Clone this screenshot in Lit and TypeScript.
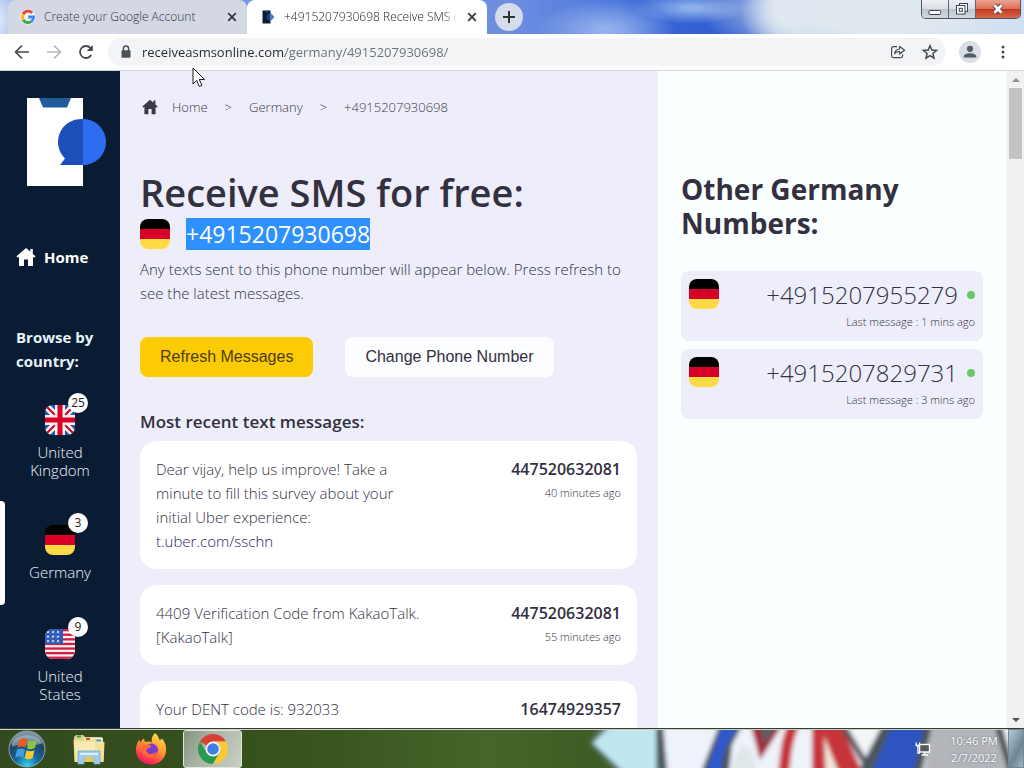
import { LitElement, html, css, svg } from "lit";
import { customElement, property } from "lit/decorators.js";
import { classMap } from "lit/directives/class-map.js";

type Flag = "de" | "gb" | "us";

const houseIcon = (size: number) => html`<svg class="house" width=${size} height=${size} viewBox="0 0 20 20" aria-hidden="true">
  <path fill="currentColor" d="M10 1 0.5 9.3l1.2 1.5L3 9.8V19h5v-6.5h4V19h5V9.8l1.3 1 1.2-1.5L16.8 6.9V2h-2.6v2.6z"/>
</svg>`;

/** Rounded country flag. */
@customElement("country-flag")
export class CountryFlag extends LitElement {
  @property() code: Flag = "de";

  static styles = css`
    :host { display: block; width: 30px; height: 30px; border-radius: 8px; overflow: hidden; flex: none; }
    svg { display: block; }
  `;

  private art() {
    if (this.code === "gb") {
      return svg`<rect width="30" height="30" fill="#1f5aa8"/>
        <path d="M0 0 30 30M30 0 0 30" stroke="#f4f0ee" stroke-width="7"/>
        <path d="M0 0 30 30M30 0 0 30" stroke="#d80027" stroke-width="2"/>
        <path d="M15 0V30M0 15H30" stroke="#f4f0ee" stroke-width="10"/>
        <path d="M15 0V30M0 15H30" stroke="#d80027" stroke-width="5"/>`;
    }
    if (this.code === "us") {
      const rows = [0, 1, 2, 3, 4, 5, 6];
      const pts = [0, 1, 2].flatMap((r) => [0, 1, 2].map((c) => [3 + c * 5, 3 + r * 4.6]));
      return svg`<rect width="30" height="30" fill="#f2f0f0"/>
        ${rows.map((r) => svg`<rect y=${r * 4.6} width="30" height="2.3" fill="#d51c40"/>`)}
        <rect width="18" height="15" fill="#2f5cb8"/>
        ${pts.map(([x, y]) => svg`<path d="M${x} ${y - 1.6}l1.5 3-2.9-2h2.9l-3 2z" fill="#fff"/>`)}`;
    }
    return svg`<rect width="30" height="10" fill="#000"/><rect y="10" width="30" height="10" fill="#d80027"/>
      <rect y="20" width="30" height="10" fill="#ffda44"/>`;
  }

  render() {
    return html`<svg width="30" height="30" viewBox="0 0 30 30" aria-hidden="true">${this.art()}</svg>`;
  }
}

/** Tab strip, window buttons and address bar. */
@customElement("browser-chrome")
export class BrowserChrome extends LitElement {
  static styles = css`
    :host { display: block; font-family: "Open Sans", "Noto Sans", sans-serif; }
    button { border: 0; padding: 0; margin: 0; background: none; display: grid; place-items: center; color: #45494e; }
    svg { display: block; }
    .strip {
      display: flex; height: 34px; align-items: stretch; padding-left: 8px;
      background:
        radial-gradient(ellipse 50px 50px at 790px 8px, #e0e9f1 30%, #e0e9f100),
        radial-gradient(ellipse 180px 60px at 880px 10px, #dfe8ef 40%, #dfe8ef00),
        radial-gradient(ellipse 60px 16px at 692px 8px, #8fb1ea 10%, #8fb1ea00),
        radial-gradient(ellipse 70px 30px at 605px 30px, #93b0ec 10%, #93b0ec00),
        radial-gradient(ellipse 30px 60px at 0 20px, #dce9f8, #dce9f800),
        linear-gradient(90deg, #7d9be6 0, #6e8ddf 50%, #4d78dc 60%, #3562d4 66%, #2f5ccf 74%, #6c91dd 77%, #c4d6f3 90%, #cbdbf4);
    }
    .tab { display: flex; align-items: center; width: 239px; box-sizing: border-box; padding: 0 7px 0 12px; border-radius: 8px 8px 0 0; background: #d3d8e4; }
    .tab.active { background: #fff; width: 240px; padding-left: 14px; }
    .title { flex: 1; font-size: 12px; line-height: 16px; margin-left: 8px; color: #33373d; white-space: nowrap; overflow: hidden; }
    .tab.active .title { color: #202328; margin-right: 6px; -webkit-mask-image: linear-gradient(90deg, #000 92%, transparent); mask-image: linear-gradient(90deg, #000 92%, transparent); }
    .close { width: 16px; height: 16px; }
    .add { width: 28px; height: 28px; border-radius: 14px; background: #d5dcec; align-self: center; margin-left: 8px; color: #333; }
    .window { display: flex; margin-left: auto; margin-right: 3px; height: 18px; border: 1px solid #4d5563; border-top: 0; border-radius: 0 0 5px 5px; overflow: hidden; }
    .window button { width: 27px; height: 18px; background: linear-gradient(#eef1f5, #dadfe5 48%, #bcc3cc 52%, #d3d9e0); border-right: 1px solid #5c6472; }
    .window .quit { width: 44px; border: 0; background: linear-gradient(#eba38f, #dd7058 48%, #c23a1d 52%, #d9694c); }
    .bar { display: flex; align-items: center; height: 36px; padding: 0 10px 0 8px; background: #fff; border-bottom: 1px solid #d3d6da; }
    .nav { width: 28px; height: 28px; margin-right: 4px; }
    .omni { flex: 1; display: flex; align-items: center; height: 28px; border-radius: 14px; background: #f2f4f5; padding: 0 0 0 11px; margin-left: 4px; }
    .url {
      flex: 1; min-width: 0; border: 0; outline: 0; padding: 0; margin-left: 9px; height: 24px; font: 13px/24px "Open Sans", "Noto Sans", sans-serif;
      background: linear-gradient(90deg, #25282c 143px, #6b7076 143px); -webkit-background-clip: text; background-clip: text; color: transparent;
    }
    .omni button { width: 32px; height: 28px; }
    .avatar { width: 22px; height: 22px; border-radius: 11px; background: #dadfe6; margin-left: 13px; overflow: hidden; }
    .menu { width: 22px; height: 28px; margin-left: 11px; }
  `;

  private cross() {
    return html`<svg width="10" height="10" viewBox="0 0 10 10"><path d="M1.2 1.2 8.8 8.8M8.8 1.2 1.2 8.8" stroke="#35383d" stroke-width="1.8"/></svg>`;
  }

  render() {
    return html`
      <div class="strip">
        <div class="tab">
          <svg width="16" height="16" viewBox="0 0 16 16" aria-hidden="true" fill="none" stroke-width="2.8">
            <circle cx="8" cy="8" r="7.8" fill="#eef0f6"/>
            <path d="M12.2 3.9A5.6 5.6 0 0 0 3.1 5.3" stroke="#ea4335"/>
            <path d="M3.1 5.3a5.6 5.6 0 0 0 0 5.4" stroke="#fbbc05"/>
            <path d="M3.1 10.7a5.6 5.6 0 0 0 8.6 1.5" stroke="#34a853"/>
            <path d="M11.7 12.2A5.6 5.6 0 0 0 13.6 8H8.2" stroke="#4285f4"/>
          </svg>
          <span class="title">Create your Google Account</span>
          <button class="close" aria-label="Close tab">${this.cross()}</button>
        </div>
        <div class="tab active">
          <svg width="15" height="16" viewBox="0 0 15 16" aria-hidden="true">
            <path d="M1.500 1.500h8v13h-8z" fill="#0b1c33"/><path d="M3.500 1.500h4l-1 1.400h-2z" fill="#2b5f9c"/>
            <path d="M9 4.200a3.800 3.800 0 1 0 0 7.600z" fill="#1a3a78"/><path d="M9.500 4.200 13 8 9.500 11.800z" fill="#5079c4" stroke="#5079c4" stroke-linejoin="round"/>
          </svg>
          <span class="title">+4915207930698 Receive SMS o</span>
          <button class="close" aria-label="Close tab">${this.cross()}</button>
        </div>
        <button class="add" aria-label="New tab">
          <svg width="14" height="14" viewBox="0 0 14 14"><path d="M7 1v12M1 7h12" stroke="currentColor" stroke-width="2"/></svg>
        </button>
        <div class="window">
          <button aria-label="Minimize"><svg width="14" height="14" viewBox="0 0 14 14"><rect x="1" y="8.500" width="11.500" height="4" rx="0.800" fill="#fff" stroke="#3d444f"/></svg></button>
          <button aria-label="Restore"><svg width="14" height="14" viewBox="0 0 14 14" fill="#fff" stroke="#3d444f"><rect x="4.500" y="1.500" width="8" height="8"/><rect x="1.500" y="3.500" width="8.500" height="8.500"/><rect x="4.300" y="6.300" width="3" height="3"/></svg></button>
          <button class="quit" aria-label="Close"><svg width="14" height="12" viewBox="0 0 14 12"><path d="M3.400 2.200 10.600 9.800M10.600 2.200 3.400 9.800" stroke="#503a4c" stroke-width="4.600"/><path d="M3.400 2.200 10.600 9.800M10.600 2.200 3.400 9.800" stroke="#fff" stroke-width="2.800"/></svg></button>
        </div>
      </div>
      <div class="bar">
        <button class="nav" aria-label="Back"><svg width="16" height="16" viewBox="0 0 16 16" fill="none" stroke="currentColor" stroke-width="1.700"><path d="M15 8H2M8 1.500 1.600 8 8 14.500"/></svg></button>
        <button class="nav" aria-label="Forward"><svg width="16" height="16" viewBox="0 0 16 16" fill="none" stroke="#b4b7bb" stroke-width="1.700"><path d="M1 8h13M8 1.500 14.400 8 8 14.500"/></svg></button>
        <button class="nav" aria-label="Reload"><svg width="16" height="16" viewBox="0 0 16 16"><path d="M13.200 11A6 6 0 1 1 12.400 3.900L13.600 5.400" fill="none" stroke="currentColor" stroke-width="1.800"/><path d="M14.800 1v6H8.800z" fill="currentColor"/></svg></button>
        <div class="omni">
          <svg width="14" height="16" viewBox="0 0 14 16" aria-hidden="true"><rect x="2.500" y="6.300" width="9" height="7.400" rx="1" fill="#4d5156"/><path d="M4.400 7V4.600a2.600 2.600 0 0 1 5.200 0V7" fill="none" stroke="#4d5156" stroke-width="1.500"/></svg>
          <input class="url" type="text" aria-label="Address and search bar" spellcheck="false" .value=${"receiveasmsonline.com/germany/4915207930698/"} />
          <button aria-label="Share"><svg width="16" height="16" viewBox="0 0 16 16" fill="none" stroke="currentColor" stroke-width="1.200" stroke-linejoin="round"><path d="M7 2.600H3.400a1.800 1.800 0 0 0-1.800 1.800v7.400a1.800 1.800 0 0 0 1.800 1.800h7.400a1.800 1.800 0 0 0 1.800-1.800V10.500"/><path d="M4.600 9.600C5 6.600 7 5.200 9.700 5V2.400L14.600 6.200 9.700 10V7.500C7.500 7.400 6 8 4.600 9.600z"/></svg></button>
          <button aria-label="Bookmark"><svg width="16" height="16" viewBox="0 0 16 16" fill="none" stroke="currentColor" stroke-width="1.500"><path d="M8 1.800 9.800 6.100 14.500 6.500 10.900 9.500 12 14.100 8 11.600 4 14.100 5.100 9.500 1.500 6.500 6.200 6.100z"/></svg></button>
        </div>
        <button class="avatar" aria-label="Profile"><svg width="22" height="22" viewBox="0 0 22 22" fill="#535b66"><circle cx="11" cy="7.800" r="3.100"/><path d="M4.800 16.600v-1c0-2.400 3.300-3.400 6.200-3.400s6.200 1 6.200 3.400v1z"/></svg></button>
        <button class="menu" aria-label="Menu"><svg width="4" height="14" viewBox="0 0 4 14" fill="currentColor"><circle cx="2" cy="2" r="1.500"/><circle cx="2" cy="7" r="1.500"/><circle cx="2" cy="12" r="1.500"/></svg></button>
      </div>`;
  }
}

/** Desktop taskbar. */
@customElement("task-bar")
export class TaskBar extends LitElement {
  static styles = css`
    :host { display: grid; height: 40px; overflow: hidden; font-family: "Open Sans", "Noto Sans", sans-serif; }
    .scene { grid-area: 1 / 1; background: linear-gradient(90deg, #33491f, #38531d 30%, #45662a 48%, #3c5a22 60%); display: flex; justify-content: flex-end; }
    .items { grid-area: 1 / 1; display: flex; align-items: center; border-top: 1px solid #333d33; box-shadow: inset 0 1px #c9d2c4; }
    svg { display: block; }
    button { border: 0; padding: 0; margin: 0; background: none; display: grid; place-items: center; }
    .start { width: 54px; height: 39px; }
    .app { width: 55px; height: 38px; box-sizing: border-box; }
    .first { margin-left: 1px; width: 68px; }
    .open { width: 59px; border: 1px solid #e2e6de; border-radius: 3px; margin-left: 5px; background: linear-gradient(120deg, #84937f, #a9b3a4 40%, #c9d0c5); }
    .tray { margin-left: auto; display: flex; align-items: center; }
    .clock { width: 68px; margin-left: 9px; text-align: center; color: #fff; font-size: 11px; font-weight: 400; line-height: 17px; text-shadow: 0 0 2px #5b6474; }
    .peek { width: 16px; height: 39px; box-sizing: border-box; border: 1px solid #6e8799; background: linear-gradient(120deg, #b5cbd6, #6c8593 60%, #9fb7c4); }
  `;

  render() {
    return html`
      <div class="scene">
        <svg width="440" height="40" viewBox="584 728 440 40" aria-hidden="true">
          <defs><filter id="soft" x="-5%" y="-20%" width="110%" height="140%"><feGaussianBlur stdDeviation="2"/></filter></defs>
          <g filter="url(#soft)">
            <path d="M588 743 604 718H670V780H622z" fill="#54705a"/>
            <path d="M593 743 614 722H656V780H632z" fill="#c0e6f0"/>
            <path d="M662 718H1034V780H668z" fill="#eef2f9"/>
            <path d="M659 718 664 780" stroke="#4e5664" stroke-width="7"/>
            <path d="M722 718H746L732 745 728 780H698z" fill="#4b5666"/>
            <path d="M727 718H740L722 750 716 780H706z" fill="#2f58cf" stroke="#2f58cf" stroke-width="4"/>
            <path d="M733 764 741 744 752 752 758 780H730z" fill="#dfe7ea"/>
            <path d="M750 722 760 760 784 722z" fill="#a32b3c"/>
            <path d="M759 720 764 744 780 722z" fill="#586068"/>
            <path d="M797 718C786 738 786 752 783 780" fill="none" stroke="#c5363a" stroke-width="11"/>
            <path d="M812 718H838L866 780H812z" fill="#c5363a"/>
            <path d="M824 736 842 780H826z" fill="#f1e6dc"/>
            <path d="M838 718 866 764" stroke="#5b5158" stroke-width="6"/>
            <path d="M846 718H888L864 752z" fill="#f3f5f7"/>
            <path d="M886 718H934L920 780H854z" fill="#4b555c"/>
            <path d="M895 718H926L912 780H868z" fill="#2e55bf"/>
            <path d="M934 718H1000L1012 780H922z" fill="#b3b5bb"/>
            <path d="M996 718 1014 780" stroke="#4a4f54" stroke-width="7"/>
          </g>
        </svg>
      </div>
      <div class="items">
        <button class="start" aria-label="Start">
          <svg width="38" height="38" viewBox="0 0 38 38">
            <defs><radialGradient id="orb" cx="50%" cy="95%" r="85%"><stop offset="0" stop-color="#35d0f5"/><stop offset=".4" stop-color="#17659e"/><stop offset=".8" stop-color="#20435f"/><stop offset="1" stop-color="#7c94a3"/></radialGradient></defs>
            <circle cx="19" cy="19" r="18" fill="url(#orb)" stroke="#8fa6ae" stroke-width="1"/>
            <path d="M4 13C8 3 30 3 34 13 26 18 12 12 4 17z" fill="#d5e4ec" opacity=".45"/>
            <path d="M11.500 9.500q4-2.500 7.800 0L17.500 17.500q-4-2-8 0z" fill="#ee5a24"/>
            <path d="M20.800 10.300q4 2 8-.3L27 18q-4 2.200-8 .2z" fill="#8cc540"/>
            <path d="M9 19.500q4-2 8 0L15.200 27.500q-4-2-8 .2z" fill="#3f9de0"/>
            <path d="M18.500 20.300q4 2 8 0L24.600 28.300q-4 2-8 0z" fill="#fcc82f"/>
          </svg>
        </button>
        <button class="app first" aria-label="Windows Explorer">
          <svg width="34" height="32" viewBox="0 0 34 32">
            <path d="M2 4 4 2H11L13 4H30V8H2z" fill="#e5d28a"/><path d="M12 5h19v4H12z" fill="#f5ecc4"/><rect x="5" y="2.500" width="4" height="2" fill="#32a14a"/><rect x="14" y="5" width="4" height="2" fill="#d64b3e"/><rect x="23" y="6.500" width="6" height="2" fill="#4793cf"/>
            <path d="M1.500 7H24l1 2h7.500l-.8 20H2.500z" fill="#f3e099"/><path d="M3 9h20v18H4z" fill="#f8ebb4"/>
            <path d="M6 18H28V31H22V26H12V31H6z" fill="#9fcdea" stroke="#6ca6cf" stroke-width=".8"/><path d="M8 20h18v2H8z" fill="#d9effa"/><path d="M13 24h8v5h-8z" fill="#e9c84e"/>
          </svg>
        </button>
        <button class="app" aria-label="Firefox">
          <svg width="32" height="34" viewBox="0 0 32 34">
            <defs><linearGradient id="fox" x1=".8" y1="0" x2=".3" y2="1"><stop offset="0" stop-color="#ffe14a"/><stop offset=".45" stop-color="#ff9a2e"/><stop offset=".8" stop-color="#ff3d4d"/><stop offset="1" stop-color="#e4156b"/></linearGradient></defs>
            <path d="M20 1c3 2.500 4 5 4.500 7 1.500 0 2.500-1.500 2.500-1.500 3.500 4 4.500 8.500 4 13C30 27 24 32.500 16 32.500 7 32.500 1 26 1 18 1 13 3 9 4.500 7.500L5 11c1-2 2.500-3.500 4-4.500L10 10c3-1 5.500-.5 7 .5C16 7 17.500 3 20 1z" fill="url(#fox)"/>
            <circle cx="16.500" cy="18" r="6.500" fill="#7a3ad0"/>
            <path d="M8 13c3-1.500 6-1 8.500 1-1 2-4 2-5 3.500-.5 3 2 5 5 4.500 3-.500 4-2 5-2-1 4-5 6-9 5-5-1.500-6.500-7-4.500-12z" fill="#ff6a35"/>
          </svg>
        </button>
        <button class="app open" aria-label="Google Chrome">
          <svg width="32" height="32" viewBox="0 0 32 32">
            <path d="M16 16 3 8.500A15 15 0 0 1 29 8.500L16 8.500z" fill="#d93f34"/>
            <path d="M3 8.500A15 15 0 0 0 16 31l6.500-11.300L16 16 9.500 19.700z" fill="#279a52"/>
            <path d="M29 8.500A15 15 0 0 1 16 31L22.500 19.700A7.500 7.500 0 0 0 16 8.500z" fill="#fbc934"/>
            <circle cx="16" cy="16" r="7.400" fill="#f4f6f8"/><circle cx="16" cy="16" r="5.800" fill="#3f7de8"/>
          </svg>
        </button>
        <div class="tray">
          <svg width="16" height="16" viewBox="0 0 16 16" aria-hidden="true" fill="none"><rect x="4.500" y="3.500" width="10" height="7.500" fill="#56585c" stroke="#fff" stroke-width="1.400"/><path d="M9.500 11v2.500M6.500 14h6.500" stroke="#fff" stroke-width="1.600"/><path d="M1.200 1.500v3h3.400v-3M2.900 4.500V12H5" stroke="#fff" stroke-width="1.300"/></svg>
          <div class="clock"><div>10:46 PM</div><div>2/7/2022</div></div>
          <button class="peek" aria-label="Show desktop"></button>
        </div>
      </div>`;
  }
}

const countries: { name: string; code: Flag; count: number; current?: boolean }[] = [
  { name: "United Kingdom", code: "gb", count: 25 },
  { name: "Germany", code: "de", count: 3, current: true },
  { name: "United States", code: "us", count: 9 },
];

const messages: { body: unknown; from: string; when?: string }[] = [
  { body: html`Dear vijay, help us improve! Take a minute to fill this survey about your initial Uber experience: <a class="link" href="#uber">t.uber.com/sschn</a>`, from: "447520632081", when: "40 minutes ago" },
  { body: "4409 Verification Code from KakaoTalk. [KakaoTalk]", from: "447520632081", when: "55 minutes ago" },
  { body: "Your DENT code is: 932033", from: "16474929357" },
];

const others = [
  { number: "+4915207955279", ago: "Last message : 1 mins ago" },
  { number: "+4915207829731", ago: "Last message : 3 mins ago" },
];

@customElement("app-root")
export class AppRoot extends LitElement {
  static styles = css`
    :host { display: grid; grid-template-rows: auto minmax(0, 1fr) auto; height: 100vh; overflow: hidden; position: relative; font: 300 15px/24px "Open Sans", "Noto Sans", sans-serif; color: #33303f; }
    svg { display: block; }
    a { color: inherit; text-decoration: none; }
    h1, h2, h3, p, ul, ol { margin: 0; padding: 0; list-style: none; }
    .page { display: grid; grid-template-columns: 120px minmax(0, 1fr) 349px 17px; min-height: 0; }
    .side, main, aside { overflow: hidden; min-height: 0; }

    .side { background: #0a1c33; color: #fff; }
    .logo { margin: 27px 0 0 27px; }
    .home { display: flex; align-items: center; gap: 8px; margin: 59px 0 0 16px; font-weight: 700; }
    .browse { font-weight: 700; margin: 56px 16px 8px; color: #e6f3f8; }
    .country { display: flex; flex-direction: column; align-items: center; box-sizing: border-box; min-height: 104px; padding: 24px 24px 22px; line-height: 18px; text-align: center; color: #f0f7fa; position: relative; }
    .country .name { margin-top: 8px; }
    .country.current::before { content: ""; position: absolute; left: 0; top: 0; bottom: 0; width: 5px; background: #fff; border-radius: 0 4px 4px 0; }
    .pin { position: relative; }
    .count { position: absolute; top: -12px; right: -13px; width: 20px; height: 20px; border-radius: 10px; background: #fff; color: #222; font-size: 12px; line-height: 20px; font-weight: 400; text-align: center; }

    main { background: #edeefa; padding: 24px 21px 0 20px; }
    .crumbs { display: flex; align-items: center; font-size: 13px; color: #3c3947; }
    .crumbs .house { margin: 0 14px 0 2px; }
    .sep { margin: 0 17px; }
    h1 { font-size: 38px; line-height: 48px; font-weight: 600; margin: 49px 0 2px; }
    .phone { display: flex; align-items: center; gap: 16px; }
    .picked { background: #2f90ff; color: #fff; font-size: 23px; line-height: 32px; font-weight: 400; }
    .intro { margin-top: 7px; }
    .actions { display: flex; gap: 32px; margin-top: 32px; }
    .action { height: 40px; padding: 0 20px; border: 0; border-radius: 8px; font: 16px/24px "Liberation Sans", Arial, sans-serif; color: #33303f; background: #fbfdff; }
    .primary { background: #fbcb04; color: #4e3b16; }
    .recent { font-size: 17px; line-height: 24px; font-weight: 600; margin: 33px 0 7px; }
    .messages { display: grid; gap: 16px; }
    .message { display: grid; grid-template-columns: 58fr 42fr; padding: 16px; background: #fff; border-radius: 16px; }
    .message .meta { text-align: right; min-height: 48px; }
    .from { font-size: 16px; font-weight: 600; }
    .when { font-size: 11px; }
    .link { color: #2c2460; display: block; }

    aside { background: #fafeff; padding: 101px 24px 0 23px; }
    h2 { font-size: 28px; line-height: 34px; font-weight: 700; margin-bottom: 31px; }
    .others { display: grid; gap: 8px; }
    .other { display: grid; grid-template-columns: auto 1fr; padding: 8px; border-radius: 8px; background: #edeefa; text-align: right; }
    .number { display: flex; align-items: center; justify-content: flex-end; gap: 9px; font-size: 24px; line-height: 32px; }
    .dot { width: 8px; height: 8px; border-radius: 4px; background: #6cc767; }
    .ago { font-size: 11px; line-height: 22px; }

    .scroll { display: flex; flex-direction: column; align-items: center; background: #f1f1f1; }
    .scroll .up, .scroll .down { height: 17px; display: grid; place-items: center; }
    .thumb { width: 13px; height: 71px; background: #c3c3c3; }
    .down { margin-top: auto; }
    .pointer { position: absolute; left: 192px; top: 67px; }
  `;

  render() {
    return html`
      <browser-chrome></browser-chrome>
      <div class="page">
        <nav class="side" aria-label="Countries">
          <svg class="logo" width="79" height="88" viewBox="0 0 79 88" role="img" aria-label="Receive a SMS online">
            <path d="M0 0h56v88H0z" fill="#fff"/><path d="M12 0h32l-4 9.500H16z" fill="#1f5c99"/>
            <path d="M55.500 21a23 23 0 0 1 0 46H33l5-6.500A23 23 0 0 1 55.500 21z" fill="#1d4fb8"/>
            <path d="M56 21a23 23 0 0 1 0 46z" fill="#2e6cf0"/>
          </svg>
          <a class="home" href="#home">${houseIcon(20)}<span>Home</span></a>
          <p class="browse">Browse by country:</p>
          <ul>
            ${countries.map((c) => html`<li><a class=${classMap({ country: true, current: !!c.current })} href="#${c.code}">
              <span class="pin"><country-flag code=${c.code}></country-flag><span class="count">${c.count}</span></span>
              <span class="name">${c.name}</span></a></li>`)}
          </ul>
        </nav>
        <main>
          <nav class="crumbs" aria-label="Breadcrumb">${houseIcon(16)}<a href="#home">Home</a><span class="sep">&gt;</span><a href="#de">Germany</a><span class="sep">&gt;</span><span>+4915207930698</span></nav>
          <h1>Receive SMS for free:</h1>
          <div class="phone"><country-flag code="de"></country-flag><span class="picked">+4915207930698</span></div>
          <p class="intro">Any texts sent to this phone number will appear below. Press refresh to see the latest messages.</p>
          <div class="actions">
            <button class="action primary">Refresh Messages</button>
            <button class="action">Change Phone Number</button>
          </div>
          <h3 class="recent">Most recent text messages:</h3>
          <ol class="messages">
            ${messages.map((m) => html`<li class="message"><div>${m.body}</div><div class="meta"><div class="from">${m.from}</div>${m.when ? html`<div class="when">${m.when}</div>` : ""}</div></li>`)}
          </ol>
        </main>
        <aside>
          <h2>Other Germany Numbers:</h2>
          <ul class="others">
            ${others.map((o) => html`<li><a class="other" href="#number"><country-flag code="de"></country-flag>
              <div><div class="number"><span>${o.number}</span><span class="dot"></span></div><div class="ago">${o.ago}</div></div></a></li>`)}
          </ul>
        </aside>
        <div class="scroll" aria-hidden="true">
          <span class="up"><svg width="8" height="4" viewBox="0 0 8 4"><path d="M0 4 4 0l4 4z" fill="#8e8e8e"/></svg></span>
          <span class="thumb"></span>
          <span class="down"><svg width="8" height="4" viewBox="0 0 8 4"><path d="M0 0h8L4 4z" fill="#505050"/></svg></span>
        </div>
      </div>
      <task-bar></task-bar>
      <svg class="pointer" width="15" height="22" viewBox="0 0 15 22" aria-hidden="true"><path d="M1 1v16l3.700-3.500L7.300 19.500l2.600-1.100-2.600-5.900H12.500z" fill="#fff" stroke="#1c1c1c" stroke-width="1"/></svg>
    `;
  }
}
